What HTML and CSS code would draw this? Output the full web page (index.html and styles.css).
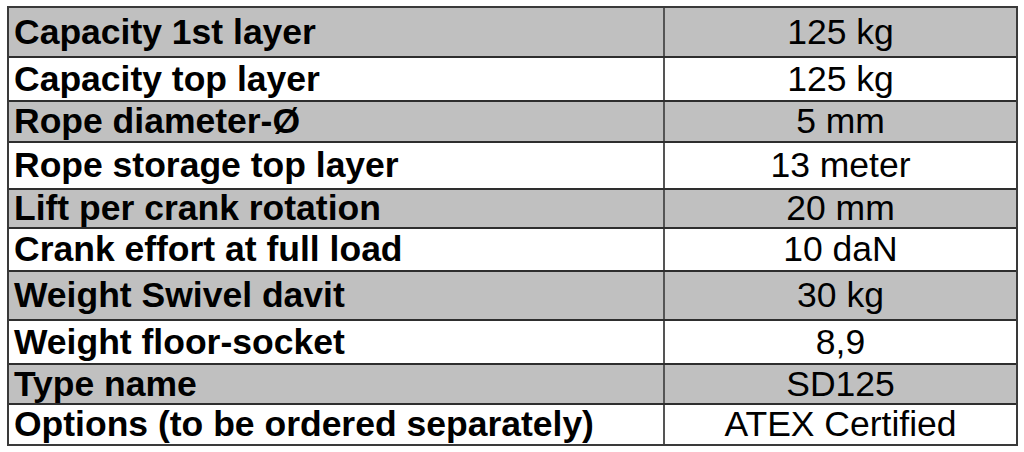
FILE: index.html
```html
<!DOCTYPE html>
<html lang="en">
<head>
<meta charset="utf-8">
<title>SD125 specifications</title>
<link rel="stylesheet" href="styles.css">
</head>
<body>
<div class="spec">
  <div class="row shade"><div class="label">Capacity 1st layer</div><div class="value">125 kg</div></div>
  <div class="row"><div class="label">Capacity top layer</div><div class="value">125 kg</div></div>
  <div class="row shade"><div class="label">Rope diameter-Ø</div><div class="value">5 mm</div></div>
  <div class="row"><div class="label">Rope storage top layer</div><div class="value">13 meter</div></div>
  <div class="row shade"><div class="label">Lift per crank rotation</div><div class="value">20 mm</div></div>
  <div class="row"><div class="label">Crank effort at full load</div><div class="value">10 daN</div></div>
  <div class="row shade"><div class="label">Weight Swivel davit</div><div class="value">30 kg</div></div>
  <div class="row"><div class="label">Weight floor-socket</div><div class="value">8,9</div></div>
  <div class="row shade"><div class="label">Type name</div><div class="value">SD125</div></div>
  <div class="row"><div class="label">Options (to be ordered separately)</div><div class="value">ATEX Certified</div></div>
</div>
</body>
</html>
```
FILE: styles.css
```css
html, body {
  background: #ffffff;
}
body {
  margin: 6px 0 0 7px;
  font-family: "Liberation Sans", Arial, sans-serif;
  color: #000000;
}
.spec {
  width: 1011px;
  box-sizing: border-box;
  border: 2px solid #3a3a3a;
  display: flex;
  flex-direction: column;
}
.row {
  display: grid;
  grid-template-columns: 656px 1fr;
  box-sizing: border-box;
  border-top: 2px solid #2e2e2e;
  background: #ffffff;
}
.row.shade {
  background: #c0c0c0;
}
.row:nth-child(1) { height: 48px; border-top: none; }
.row:nth-child(2) { height: 44px; }
.row:nth-child(3) { height: 41px; }
.row:nth-child(4) { height: 47px; }
.row:nth-child(5) { height: 39px; }
.row:nth-child(6) { height: 43px; }
.row:nth-child(7) { height: 49px; }
.row:nth-child(8) { height: 44px; }
.row:nth-child(9) { height: 40px; }
.row:nth-child(10) { height: 41px; }
.label, .value {
  display: flex;
  align-items: center;
  font-size: 35.5px;
  line-height: 1;
  padding-top: 1px;
  box-sizing: border-box;
  white-space: nowrap;
}
.label {
  font-weight: bold;
  padding-left: 5px;
  border-right: 2px solid #555555;
}
.value {
  justify-content: center;
  font-weight: normal;
}
```
